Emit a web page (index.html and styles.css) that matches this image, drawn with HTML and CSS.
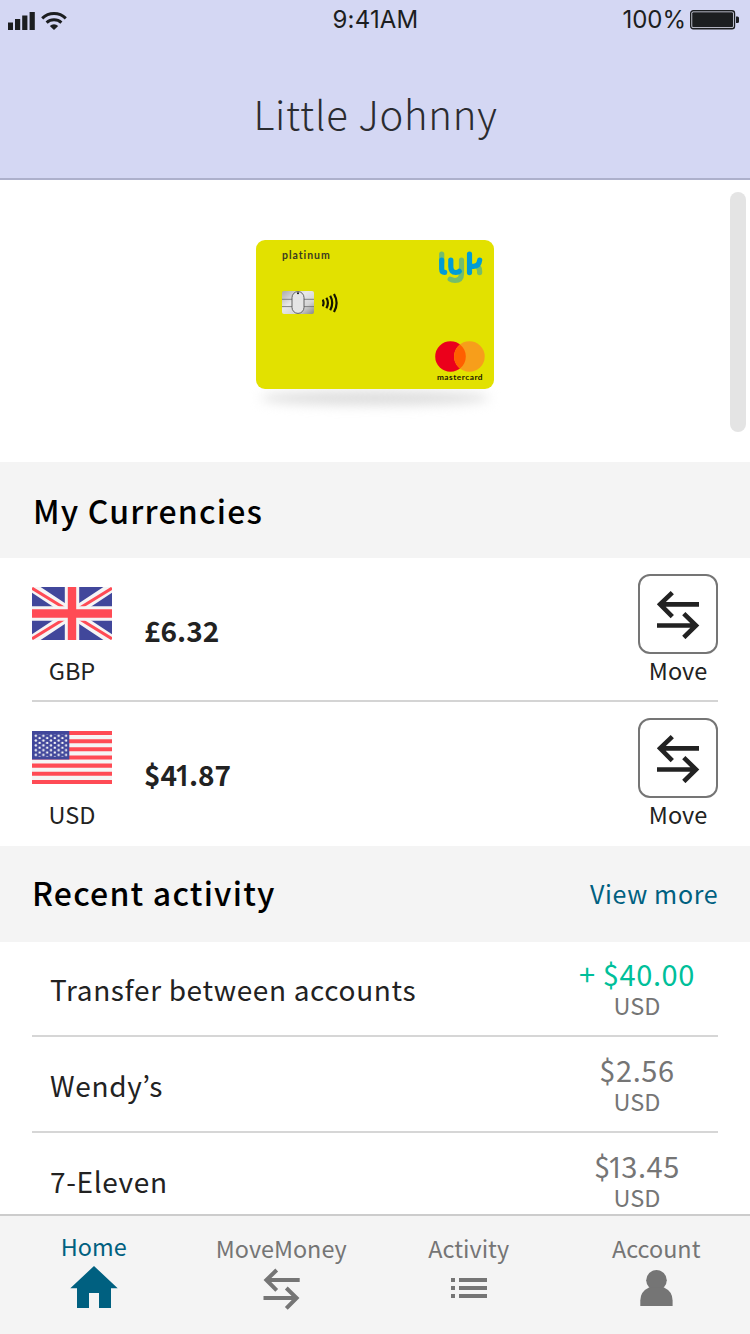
FILE: index.html
```html
<!DOCTYPE html>
<html lang="en">
<head>
<meta charset="utf-8">
<title>Little Johnny</title>
<link rel="stylesheet" href="styles.css">
</head>
<body>
<div class="app">
  <header class="header">
    <div class="status">
      <div class="status-left">
        <svg width="60" height="20" viewBox="0 0 60 20">
          <g fill="#1c1e20"><rect x="0" y="12.5" width="5" height="7.5"/><rect x="7" y="9" width="5.2" height="11"/><rect x="14.2" y="5.5" width="5.2" height="14.5"/><rect x="21.6" y="2" width="5.2" height="18"/></g>
          <g fill="none" stroke="#1c1e20" stroke-width="3"><path d="M34.200 8.300a17 17 0 0 1 23.600 0"/><path d="M38.600 12.600a11 11 0 0 1 14.800 0"/></g>
          <path d="M41.800 15.900a6.300 6.300 0 0 1 8.400 0L46 20z" fill="#1c1e20"/>
        </svg>
      </div>
      <div class="status-time">9:41AM</div>
      <div class="status-right">
        <span>100%</span>
        <svg width="50" height="20" viewBox="0 0 50 20"><rect x=".7" y=".7" width="43.8" height="18" rx="2.5" fill="#e4e6f6" stroke="#1c1e20" stroke-width="1.4"/><rect x="2.2" y="2.2" width="40.8" height="15" rx="1.2" fill="#1c1e20"/><path d="M46 6.500h1.500q1.500 0 1.500 1.500v3.500q0 1.500-1.500 1.500H46z" fill="#1c1e20"/></svg>
      </div>
    </div>
    <h1 class="title">Little Johnny</h1>
  </header>

  <section class="card-area">
    <div class="card">
      <div class="card-left">
        <span class="card-tier">platinum</span>
        <div class="card-chip">
          <svg width="32" height="23" viewBox="0 0 32 23">
            <defs><linearGradient id="chip" x1="0" y1="0" x2="1" y2="1"><stop offset="0" stop-color="#aaa"/><stop offset=".4" stop-color="#e8e8e8"/><stop offset=".7" stop-color="#d4d4d4"/><stop offset="1" stop-color="#888"/></linearGradient></defs>
            <rect width="32" height="23" rx="2" fill="url(#chip)"/>
            <path d="M0 8.300h10.500M0 15.600h10.500M21.500 8.300H32M21.500 15.600H32" stroke="#777" stroke-width=".9"/>
            <rect x="10" y=".6" width="12" height="21.8" rx="6" fill="#e5e5e5" stroke="#555" stroke-width=".9"/><circle cx="16" cy="2.300" r="1" fill="#111"/>
          </svg>
          <svg width="17" height="20" viewBox="0 0 17 20" fill="none" stroke="#161600" stroke-width="2.2"><path d="M.6 6.700q2 3.200 0 6.600M4.400 4.700q3 5.200 0 10.600M8.200 2.800q4 7 0 14.400M12 1q5.200 8.800 0 18"/></svg>
        </div>
      </div>
      <div class="card-right">
        <svg class="lyk" width="46" height="34" viewBox="0 0 46 34" fill="none" stroke-width="5.2" stroke-linecap="round" stroke-linejoin="round" role="img" aria-label="lyk">
          <path d="M3.700 4v8" stroke="#74bd6b"/><path d="M3.700 10v9q0 3.300 3 3.400" stroke="#009cd6"/>
          <path d="M23.500 10v13.500q0 7-6.500 7q-3 0-4.800-1.300" stroke="#74bd6b"/><path d="M12.800 10v6.500q0 6 5 6q2.500 0 3.600-1.200" stroke="#009cd6"/>
          <path d="M41.600 22.600v-1.600q0-4-3.500-5.200" stroke="#74bd6b"/><path d="M31.500 4v18.600M31.500 16.300h4q5.500 0 6.200-6.300" stroke="#009cd6"/>
        </svg>
        <div class="mc">
          <svg width="50" height="31" viewBox="0 0 50 31"><circle cx="15.500" cy="15.500" r="15.300" fill="#eb001b"/><circle cx="34.400" cy="15.500" r="15.300" fill="#f79e1b"/><path d="M24.950 3.450a15.300 15.300 0 0 1 0 24.100a15.300 15.300 0 0 1 0-24.100z" fill="#ff5f00"/></svg>
          <span class="mc-name">mastercard</span>
        </div>
      </div>
    </div>
    <div class="card-shadow"></div>
    <div class="scrollbar"></div>
  </section>

  <div class="section-head"><h2 class="currencies-title">My Currencies</h2></div>
  <section class="currencies">
    <div class="currency">
      <div class="flag-col">
        <svg class="flag" width="80" height="53" viewBox="0 0 80 53">
          <rect width="80" height="53" rx="1" fill="#41479b"/>
          <path d="M0 0L80 53M80 0L0 53" stroke="#f5f5f5" stroke-width="9.5"/>
          <path d="M0 1.200L33 21.500M80 1.200L47 21.500M0 51.800L33 31.500M80 51.800L47 31.500" stroke="#ff4b55" stroke-width="3.1"/>
          <path d="M40 0v53M0 26.500h80" stroke="#f5f5f5" stroke-width="14.4"/>
          <path d="M40 0v53M0 26.500h80" stroke="#ff4b55" stroke-width="8.4"/>
        </svg>
        <span class="code">GBP</span>
      </div>
      <span class="balance">£6.32</span>
      <div class="move">
        <button class="move-btn" aria-label="Move"><svg width="44" height="50" viewBox="656 589 44 50" fill="none" stroke="#222" stroke-width="4.6"><path d="M660 604.400h39M672.300 592.600l-12.200 11.800l12.200 12.200M657 625.500h39M683.800 613.600l12.200 11.900l-12.200 12"/></svg></button>
        <span class="code">Move</span>
      </div>
    </div>
    <div class="currency">
      <div class="flag-col">
        <svg class="flag" width="80" height="53" viewBox="0 0 80 53">
          <defs><pattern id="stars" x="2" y="3.3" width="7.6" height="4.8" patternUnits="userSpaceOnUse"><circle cx="1.800" cy="1.400" r="1.250" fill="#f5f5f5"/><circle cx="5.600" cy="3.800" r="1.250" fill="#f5f5f5"/></pattern></defs>
          <rect width="80" height="53" rx="1.5" fill="#f5f5f5"/>
          <path d="M0 2h80M0 10.200h80M0 18.300h80M0 26.500h80M0 34.600h80M0 42.800h80M0 51h80" stroke="#ff4b55" stroke-width="4.1"/>
          <rect width="37.3" height="28.5" fill="#41479b"/><rect x="2" y="3.3" width="33.5" height="22.5" fill="url(#stars)"/>
        </svg>
        <span class="code">USD</span>
      </div>
      <span class="balance">$4<span class="one">1</span>.87</span>
      <div class="move">
        <button class="move-btn" aria-label="Move"><svg width="44" height="50" viewBox="656 589 44 50" fill="none" stroke="#222" stroke-width="4.6"><path d="M660 604.400h39M672.300 592.600l-12.200 11.800l12.200 12.200M657 625.500h39M683.800 613.600l12.200 11.900l-12.200 12"/></svg></button>
        <span class="code">Move</span>
      </div>
    </div>
  </section>

  <div class="section-head"><h2 class="recent-title">Recent activity</h2><a class="view-more">View more</a></div>
  <section class="activity">
    <div class="entry"><span class="entry-name">Transfer between accounts</span><div class="entry-sum"><span class="sum plus">+ $40.00</span><span class="unit">USD</span></div></div>
    <div class="entry"><span class="entry-name">Wendy’s</span><div class="entry-sum"><span class="sum">$2.56</span><span class="unit">USD</span></div></div>
    <div class="entry"><span class="entry-name">7-Eleven</span><div class="entry-sum"><span class="sum">$<span class="one">1</span>3.45</span><span class="unit">USD</span></div></div>
  </section>

  <nav class="tabs">
    <a class="tab active"><span>Home</span><svg width="48" height="42" viewBox="70 1266 48 42"><path d="M94 1266l23.700 22.300H111V1308H99v-15H89v15H77v-19.700h-6.700z" fill="#006080"/></svg></a>
    <a class="tab"><span>MoveMoney</span><svg width="38" height="42" viewBox="262 1268 38 42" fill="none" stroke="#757575" stroke-width="4"><path d="M266 1280h33.700M276.700 1270l-10.300 10l10.300 10.400M263.500 1298H297M286.300 1288l10.300 10l-10.300 10.300"/></svg></a>
    <a class="tab"><span>Activity</span><svg class="list" width="36" height="20" viewBox="0 0 36 20"><path d="M0 2h4M8 2h28M0 10h4M8 10h28M0 18h4M8 18h28" stroke="#757575" stroke-width="4"/></svg></a>
    <a class="tab"><span>Account</span><svg class="person" width="33" height="36" viewBox="0 0 33 36" fill="#757575"><circle cx="16.500" cy="10.300" r="10.300"/><path d="M.3 36v-5.500Q.3 21.500 9 17.500h15q8.600 4 8.600 13V36z"/></svg></a>
  </nav>
</div>
</body>
</html>
```

FILE: styles.css
```css
* { box-sizing: border-box; margin: 0; padding: 0; }
body { font-family: "Noto Sans CJK KR", "Noto Sans", sans-serif; color: #222; background: #fff; }
svg { display: block; flex: none; }
.app { width: 750px; height: 1334px; display: flex; flex-direction: column; overflow: hidden; }

.header { height: 180px; flex: none; background: #d4d7f3; border-bottom: 2px solid #adb0cb; }
.status { height: 40px; display: grid; grid-template-columns: 1fr auto 1fr; padding: 0 10px 0 8px; font: 24px/40px Inter, sans-serif; color: #1c1e20; }
.status-left { padding-top: 10px; }
.status-time { letter-spacing: .2px; padding-left: 3px; }
.status-right { display: flex; justify-content: flex-end; gap: 4px; }
.status-right svg { margin-top: 10px; }
.title { font-weight: 300; font-size: 40px; line-height: 60px; letter-spacing: .75px; text-align: center; margin-top: 43px; padding-left: 1px; color: #2b2c30; }

.card-area { height: 282px; flex: none; position: relative; padding-top: 60px; display: flex; flex-direction: column; align-items: center; }
.card { width: 238px; height: 148.5px; border-radius: 9px; background: #e2e100; display: flex; justify-content: space-between; padding: 9px 9.5px 6.5px 26px; position: relative; z-index: 1; }
.card-tier { display: block; font: 700 10.5px/12px Lato, sans-serif; letter-spacing: .95px; color: #3b3b20; }
.card-chip { display: flex; align-items: center; gap: 8px; margin-top: 30px; }
.card-right { display: flex; flex-direction: column; justify-content: space-between; align-items: flex-end; }
.lyk { margin: 1px 1px 0 0; }
.mc { display: flex; flex-direction: column; align-items: center; }
.mc-name { font: 700 8.3px/10px Lato, sans-serif; letter-spacing: .5px; padding-left: 1px; color: #1d1b00; }
.card-shadow { width: 230px; height: 14px; margin-top: 2px; border-radius: 50%; background: #dcdcdc; filter: blur(6px); }
.scrollbar { position: absolute; right: 4px; top: 12px; width: 16px; height: 240px; border-radius: 8px; background: #e4e4e4; }

.section-head { height: 96px; flex: none; background: #f4f4f4; display: flex; justify-content: space-between; padding: 0 32px 0 33px; }
.section-head h2 { font-weight: 500; font-size: 32px; letter-spacing: 1.2px; color: #000; }
.section-head .currencies-title { line-height: 96px; }
.section-head .recent-title { line-height: 93px; margin-left: -1px; }
.view-more { font-size: 25px; line-height: 94px; letter-spacing: .65px; color: #006080; margin-right: -.3px; }

.currencies { padding: 0 32px; flex: none; }
.currency { height: 144px; display: flex; align-items: flex-start; }
.currency:first-child { border-bottom: 2px solid #d4d4d4; }
.flag-col { width: 80px; padding-top: 29px; display: flex; flex-direction: column; align-items: center; }
.flag-col .code { margin-top: 14px; }
.code { font-size: 23.5px; line-height: 32px; }
.balance { font-weight: 700; font-size: 28px; line-height: 40px; margin: 52px 0 0 32px; }
/* Footless, narrow numeral one */
.one { font-family: "Noto Sans", sans-serif; font-size: 1.02em; line-height: 1; margin: 0 -2px 0 -2.5px; }
.balance .one { font-weight: 600; }
.move { margin-left: auto; padding-top: 16px; display: flex; flex-direction: column; align-items: center; }
.move-btn { width: 80px; height: 80px; border: 2px solid #757575; border-radius: 12px; background: #fff; display: flex; align-items: center; justify-content: center; }

.activity { padding: 0 32px; margin-top: -1px; flex: 1; min-height: 0; overflow: hidden; }
.entry { height: 96px; border-bottom: 2px solid #d6d6d6; display: flex; justify-content: space-between; padding: 0 0 0 18px; }
.entry-name { font-size: 28px; line-height: 96px; letter-spacing: .65px; }
.entry-sum { width: 162px; display: flex; flex-direction: column; align-items: center; color: #757575; padding-top: 12px; }
.sum { font-size: 29px; line-height: 40px; letter-spacing: .6px; }
.sum .one { margin: 0 -3.5px; }
.plus { color: #00bf9a; }
.unit { font-size: 23.5px; line-height: 24px; }

.tabs { height: 120px; flex: none; background: #f4f4f4; border-top: 2px solid #ccc; display: grid; grid-template-columns: repeat(4, 1fr); position: relative; }
.tab { display: flex; flex-direction: column; align-items: center; font-size: 23.4px; line-height: 32px; color: #757575; padding-top: 16px; }
.tab svg { margin-top: 4px; }
.tab.active { padding-top: 14px; color: #006080; }
.tab .list { margin-top: 14px; }
.tab .person { margin-top: 6px; }
```
